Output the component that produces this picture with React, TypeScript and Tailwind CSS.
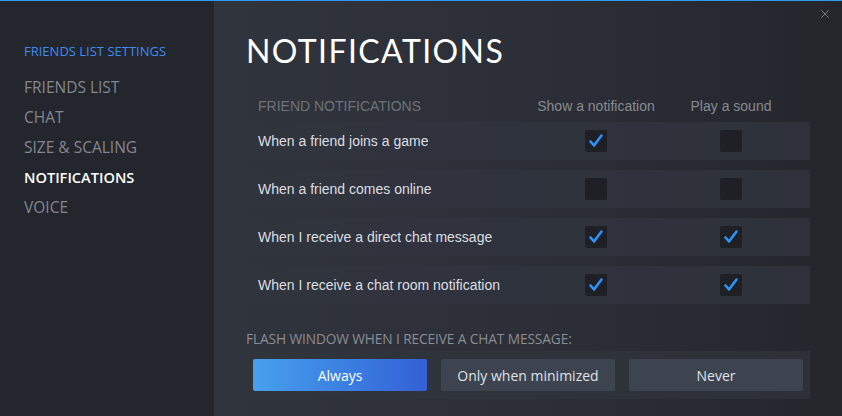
import { X } from "lucide-react";

const nav = ["FRIENDS LIST", "CHAT", "SIZE & SCALING", "NOTIFICATIONS", "VOICE"];

const rows = [
  { label: "When a friend joins a game", show: true, sound: false },
  { label: "When a friend comes online", show: false, sound: false },
  { label: "When I receive a direct chat message", show: true, sound: true },
  { label: "When I receive a chat room notification", show: true, sound: true },
];

const Check = ({ on }: { on: boolean }) => (
  <div className="flex h-[22px] w-[22px] items-center justify-center rounded-[2px] bg-[#1e2026]">
    {on && (
      <svg width="16" height="16" viewBox="0 0 16 16" fill="none">
        <path
          d="M2.5 8.5 L6 12.5 L13.5 2.5"
          stroke="#2d93f5"
          strokeWidth="2.6"
          strokeLinecap="round"
          strokeLinejoin="round"
        />
      </svg>
    )}
  </div>
);

const App = () => {
  return (
    <div className="relative flex h-[416px] w-[842px] overflow-hidden border-t border-[#2f9bf0] bg-[#24262d] font-['Open_Sans',sans-serif]">
      <aside className="w-[214px] shrink-0 bg-[#23262d] pl-6 pt-[41px]">
        <p className="text-[13px] leading-[18px] text-[#3e8bf4]">FRIENDS LIST SETTINGS</p>
        <ul className="mt-[12px] flex flex-col">
          {nav.map((item) => (
            <li
              key={item}
              className={
                item === "NOTIFICATIONS"
                  ? "h-[30px] text-[14.6px] leading-[30px] font-semibold text-white"
                  : "h-[30px] text-[15.5px] leading-[30px] text-[#84878d]"
              }
            >
              {item}
            </li>
          ))}
        </ul>
      </aside>

      <main className="flex-1 bg-gradient-to-r from-[#30343c] via-[#2c2f37] to-[#24262c] pl-8 pr-8">
        <h1 className="mt-[28px] font-['Lato',sans-serif] text-[32px] leading-[44px] tracking-[1.4px] text-white">
          NOTIFICATIONS
        </h1>

        <div className="mt-[18px] flex h-[30px] items-center font-['Liberation_Sans',sans-serif] text-[14px]">
          <span className="ml-3 w-[278px] text-[#6f7279]">FRIEND NOTIFICATIONS</span>
          <span className="w-[120px] text-center text-[#878a90]">Show a notification</span>
          <span className="ml-[15px] w-[120px] text-center text-[#878a90]">Play a sound</span>
        </div>

        <div className="mt-[1px] flex w-[564px] flex-col gap-[10px]">
          {rows.map((r) => (
            <div key={r.label} className="flex h-[38px] items-center bg-[#31353e]/80">
              <span className="w-[339px] pl-3 font-['Liberation_Sans',sans-serif] text-[14px] text-[#dcdee1]">
                {r.label}
              </span>
              <Check on={r.show} />
              <div className="w-[113px]" />
              <Check on={r.sound} />
            </div>
          ))}
        </div>

        <p className="mt-[25px] text-[13.7px] leading-[19px] tracking-[-0.1px] text-[#8a8d93]">
          FLASH WINDOW WHEN I RECEIVE A CHAT MESSAGE:
        </p>
        <div className="mt-[3px] flex h-[48px] w-[564px] items-center gap-[14px] bg-[#30343c]/70 px-[7px]">
          <button className="h-[32px] flex-1 rounded-[2px] bg-gradient-to-r from-[#47a0ee] to-[#3460d5] text-[14px] text-white">
            Always
          </button>
          <button className="h-[32px] flex-1 rounded-[2px] bg-[#3d4450] text-[14px] text-[#dfe1e4]">
            Only when minimized
          </button>
          <button className="h-[32px] flex-1 rounded-[2px] bg-[#3d4450] text-[14px] text-[#dfe1e4]">
            Never
          </button>
        </div>
      </main>

      <button className="absolute top-[6px] right-[10px] text-[#7c7f86]" title="Close">
        <X size={14} strokeWidth={1.6} />
      </button>
    </div>
  );
};

export default App;
